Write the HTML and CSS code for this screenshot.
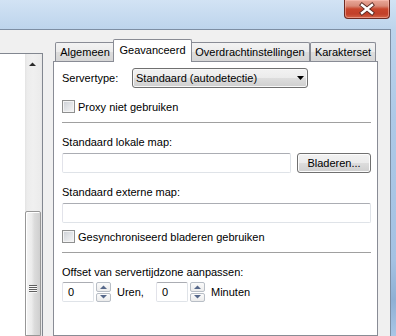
FILE: index.html
```html
<!DOCTYPE html>
<html>
<head>
<meta charset="utf-8">
<link rel="stylesheet" href="styles.css">
</head>
<body>
<div class="window">
  <div class="titlebar">
    <div class="close">
      <svg width="44" height="18" viewBox="0 0 44 18">
        <path d="M17 5 L27 13 M27 5 L17 13" stroke="#5a2a24" stroke-width="4.2" stroke-linecap="square" fill="none"/>
        <path d="M17 5 L27 13 M27 5 L17 13" stroke="#ffffff" stroke-width="2.4" stroke-linecap="square" fill="none"/>
      </svg>
    </div>
  </div>
  <div class="client">
    <div class="listbox">
      <div class="scrollbar">
        <div class="sb-up">
          <svg width="16" height="17" viewBox="0 0 16 17"><path d="M4 12 L11 12 L7.5 8.5 Z" fill="#2b2b2b"/></svg>
        </div>
        <div class="sb-track"></div>
        <div class="sb-thumb">
          <div class="grip"><span></span><span></span><span></span><span></span></div>
        </div>
      </div>
    </div>
    <div class="tabctl">
      <div class="tabs">
        <div class="tab t1">Algemeen</div>
        <div class="tab selected t2">Geavanceerd</div>
        <div class="tab t3">Overdrachtinstellingen</div>
        <div class="tab t4">Karakterset</div>
      </div>
      <div class="panel">
        <div class="row-server">
          <span class="lbl-server">Servertype:</span>
          <div class="combo">
            <span>Standaard (autodetectie)</span>
            <svg width="8" height="5" viewBox="0 0 8 5"><path d="M0 0 L7 0 L3.5 4 Z" fill="#000"/></svg>
          </div>
        </div>
        <div class="check check-proxy"><span class="box"></span><span class="check-label">Proxy niet gebruiken</span></div>
        <div class="sep"></div>
        <div class="label gap-label">Standaard lokale map:</div>
        <div class="row-local">
          <div class="textbox grow"></div>
          <div class="button">Bladeren...</div>
        </div>
        <div class="label gap-label">Standaard externe map:</div>
        <div class="textbox full"></div>
        <div class="check check-sync"><span class="box"></span><span class="check-label">Gesynchroniseerd bladeren gebruiken</span></div>
        <div class="sep"></div>
        <div class="label gap-label">Offset van servertijdzone aanpassen:</div>
        <div class="row-spin">
          <div class="textbox spin-input">0</div>
          <div class="spin">
            <div class="spin-btn"><svg width="7" height="4" viewBox="0 0 7 4"><path d="M0 4 L7 4 L3.5 0.5 Z" fill="#56688a"/></svg></div>
            <div class="spin-btn"><svg width="7" height="4" viewBox="0 0 7 4"><path d="M0 0 L7 0 L3.5 3.5 Z" fill="#56688a"/></svg></div>
          </div>
          <span class="unit unit-h">Uren,</span>
          <div class="textbox spin-input">0</div>
          <div class="spin">
            <div class="spin-btn"><svg width="7" height="4" viewBox="0 0 7 4"><path d="M0 4 L7 4 L3.5 0.5 Z" fill="#56688a"/></svg></div>
            <div class="spin-btn"><svg width="7" height="4" viewBox="0 0 7 4"><path d="M0 0 L7 0 L3.5 3.5 Z" fill="#56688a"/></svg></div>
          </div>
          <span class="unit">Minuten</span>
        </div>
      </div>
    </div>
  </div>
</div>
</body>
</html>
```
FILE: styles.css
```css
html, body {
  margin: 0;
  padding: 0;
}
body {
  width: 396px;
  height: 336px;
  overflow: hidden;
  font-family: "Liberation Sans", Arial, sans-serif;
  font-size: 11px;
  color: #000;
}
.window {
  height: 336px;
  display: flex;
  flex-direction: column;
  background: linear-gradient(180deg, #d2e3f4 0px, #bdd4ec 29px, #adc9e7 120px, #a4c2e3 260px, #8fb0d4 300px, #a9c6e6 336px);
}
.titlebar {
  height: 29px;
  flex: none;
  display: flex;
  justify-content: flex-end;
  align-items: flex-start;
  padding-right: 6px;
}
.close {
  width: 46px;
  height: 19px;
  box-sizing: border-box;
  border: 1px solid #6d2a22;
  border-top: none;
  border-radius: 0 0 4px 4px;
  background: linear-gradient(180deg, #e9a899 0px, #d88a78 6px, #c8452c 9px, #c2402a 14px, #d76d4f 19px);
  box-shadow: inset 0 0 0 1px rgba(255, 200, 190, 0.5);
  display: flex;
  align-items: center;
  justify-content: center;
}
.client {
  flex: 1;
  min-height: 0;
  margin-right: 5px;
  border-top: 1px solid #7d8ea3;
  border-right: 1px solid #7d8ea3;
  background: #f0f0f0;
  display: flex;
  align-items: stretch;
}
.listbox {
  width: 43px;
  flex: none;
  box-sizing: border-box;
  margin-top: 23px;
  border-top: 1px solid #828790;
  border-right: 1px solid #828790;
  background: #fff;
  display: flex;
  justify-content: flex-end;
}
.scrollbar {
  width: 17px;
  display: flex;
  flex-direction: column;
  background: linear-gradient(90deg, #e3e3e3 0px, #ececec 2px, #f0f0f0 8px, #ececec 15px, #e6e6e6 17px);
}
.sb-up {
  height: 17px;
  flex: none;
}
.sb-up svg {
  display: block;
}
.sb-track {
  height: 140px;
  flex: none;
}
.sb-thumb {
  flex: 1;
  margin-right: 1px;
  box-sizing: border-box;
  border: 1px solid #979797;
  border-radius: 2px 2px 0 0;
  background: linear-gradient(90deg, #f5f5f5 0%, #ececec 40%, #dcdcdc 60%, #cfcfcf 100%);
  box-shadow: inset 1px 1px 0 #ffffff;
  display: flex;
  flex-direction: column;
  align-items: center;
  padding-top: 73px;
}
.grip {
  display: flex;
  flex-direction: column;
  gap: 1px;
}
.grip span {
  display: block;
  width: 8px;
  height: 1px;
  background: #5f5f5f;
  box-shadow: 0 1px 0 #f8f8f8;
}
.tabctl {
  width: 325px;
  flex: none;
  margin-left: 10px;
  margin-top: 9px;
  display: flex;
  flex-direction: column;
}
.tabs {
  height: 22px;
  flex: none;
  display: flex;
  align-items: flex-end;
  padding-left: 2px;
  position: relative;
  z-index: 1;
}
.tab {
  height: 19px;
  box-sizing: border-box;
  border: 1px solid #898c95;
  border-bottom: none;
  border-radius: 2px 2px 0 0;
  background: linear-gradient(180deg, #f3f3f3 0%, #ebebeb 50%, #dddddd 51%, #d6d6d6 100%);
  text-align: center;
  padding-top: 2px;
  line-height: 15px;
  white-space: nowrap;
}
.t1 { width: 60px; }
.t2 { width: 79px; }
.t3 { width: 120px; }
.t4 { width: 66px; }
.tab.selected {
  height: 23px;
  margin: 0 -2px -1px -2px;
  background: #fff;
  padding-top: 3px;
  position: relative;
  z-index: 2;
}
.panel {
  flex: 1;
  border: 1px solid #898c95;
  background: #fff;
  padding: 6px 6px 0 8px;
  display: flex;
  flex-direction: column;
}
.row-server {
  height: 20px;
  display: flex;
  align-items: center;
}
.lbl-server {
  width: 70px;
}
.combo {
  width: 176px;
  height: 20px;
  box-sizing: border-box;
  border: 1px solid #707070;
  border-radius: 3px;
  background: linear-gradient(180deg, #f2f2f2 0%, #ebebeb 50%, #dddddd 51%, #cfcfcf 100%);
  box-shadow: inset 0 0 0 1px #f8f8f8;
  display: flex;
  align-items: center;
  justify-content: space-between;
  padding: 0 2px 0 3px;
}
.combo svg {
  display: block;
}
.check {
  height: 15px;
  display: flex;
  align-items: center;
}
.check-proxy {
  margin-top: 11px;
}
.check-sync {
  margin-top: 6px;
}
.box {
  width: 13px;
  height: 13px;
  box-sizing: border-box;
  border: 1px solid #8e8f8f;
  background: linear-gradient(135deg, #cbcfd5 0%, #e2e4e7 50%, #f6f6f6 100%);
  box-shadow: inset 0 0 0 1px #f4f4f4;
  flex: none;
}
.check-label {
  margin-left: 3px;
}
.sep {
  height: 1px;
  margin-top: 8px;
  background: #a0a0a0;
}
.label {
  line-height: 15px;
}
.gap-label {
  margin-top: 12px;
}
.row-local {
  margin-top: 3px;
  display: flex;
  gap: 6px;
}
.textbox {
  height: 20px;
  box-sizing: border-box;
  border: 1px solid #dfe3e8;
  border-top-color: #abadb3;
  border-left-color: #e2e3ea;
  border-radius: 2px;
  background: #fff;
}
.grow {
  flex: 1;
}
.full {
  margin-top: 3px;
  width: 309px;
}
.button {
  width: 74px;
  height: 20px;
  box-sizing: border-box;
  border: 1px solid #707070;
  border-radius: 3px;
  background: linear-gradient(180deg, #f2f2f2 0%, #ebebeb 50%, #dddddd 51%, #cfcfcf 100%);
  box-shadow: inset 0 0 0 1px #fcfcfc;
  text-align: center;
  line-height: 18px;
}
.row-spin {
  margin-top: 2px;
  display: flex;
  align-items: center;
}
.spin-input {
  width: 32px;
  padding-left: 5px;
  line-height: 18px;
}
.spin {
  margin-left: 2px;
  width: 15px;
  height: 20px;
  display: flex;
  flex-direction: column;
  gap: 1px;
}
.spin-btn {
  flex: 1;
  box-sizing: border-box;
  border: 1px solid #b8bec6;
  border-radius: 2px;
  background: linear-gradient(180deg, #fbfbfb 0%, #ececec 100%);
  display: flex;
  align-items: center;
  justify-content: center;
}
.spin-btn svg {
  display: block;
}
.unit {
  margin-left: 6px;
}
.unit-h {
  width: 27px;
  margin-right: 12px;
}
```
